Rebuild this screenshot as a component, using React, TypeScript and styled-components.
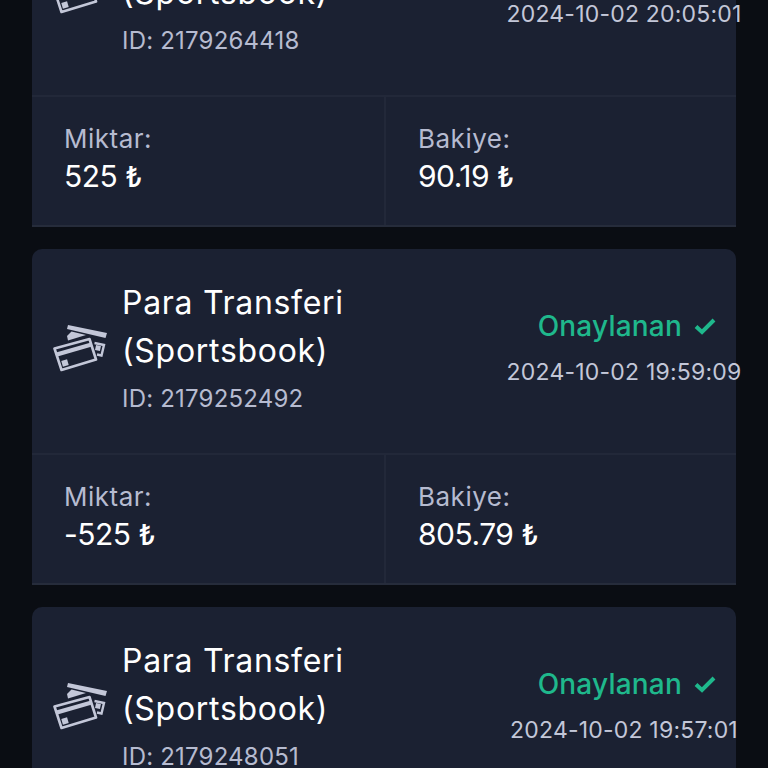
import { createGlobalStyle } from 'styled-components';
import styled from 'styled-components';

const GlobalStyle = createGlobalStyle`
  html, body {
    margin: 0;
    padding: 0;
    background: #0a0d13;
    overflow: hidden;
  }
`;

const Page = styled.div`
  width: 768px;
  height: 768px;
  overflow: hidden;
  font-family: Inter, 'Noto Sans', sans-serif;
`;

// list is scrolled, first card starts above the fold
const List = styled.ul`
  list-style: none;
  margin: -109px 0 0;
  padding: 0 32px;
  display: flex;
  flex-direction: column;
  gap: 22px;
`;

const Card = styled.li`
  background: #1b2132;
  border-radius: 10px 10px 0 0;
  border-bottom: 2px solid #262c3b;
`;

const Header = styled.div`
  height: 206px;
  box-sizing: border-box;
  display: flex;
  align-items: center;
  padding: 0 12px 4px 21px;
  border-bottom: 2px solid #222839;
`;

const IconBox = styled.div`
  width: 54px;
  height: 50px;
  flex: none;
  margin: 0 15px 4px 0;
`;

const Info = styled.div`
  flex: 1;
  min-width: 0;
`;

const Title = styled.div`
  color: #fff;
  font-size: 32px;
  line-height: 48px;
  letter-spacing: 0.7px;
`;

const Id = styled.div`
  color: #b6bbd0;
  font-size: 24px;
  line-height: 40px;
  letter-spacing: 0.2px;
  margin-top: 4px;
`;

const StatusCol = styled.div`
  width: 200px;
  flex: none;
  display: flex;
  flex-direction: column;
  align-items: center;
  white-space: nowrap;
`;

const Status = styled.div`
  align-self: flex-end;
  display: flex;
  align-items: center;
  gap: 12px;
  color: #1fb88c;
  font-size: 28px;
  font-weight: 500;
  line-height: 32px;
  letter-spacing: 0.2px;
  margin-right: 8px;
`;

const DateText = styled.div`
  color: #c3c7d8;
  font-size: 23px;
  line-height: 32px;
  letter-spacing: 0.2px;
  margin-top: 14px;
`;

const Cells = styled.div`
  display: grid;
  grid-template-columns: 1fr 1fr;
  height: 128px;
`;

const Cell = styled.div`
  box-sizing: border-box;
  padding: 25px 0 0 32px;
  & + & {
    border-left: 2px solid #222839;
  }
`;

const Label = styled.div`
  color: #b6bbd0;
  font-size: 26px;
  line-height: 34px;
  letter-spacing: 0.5px;
`;

const Value = styled.div`
  color: #fff;
  font-size: 30px;
  line-height: 40px;
  letter-spacing: -0.5px;
`;

const Lira = styled.span`
  font-size: 28px;
  font-weight: 500;
`;

function CardsIcon() {
  return (
    <svg width="54" height="50" viewBox="0 0 54 50" fill="none">
      <path d="M15 3 L54 11 L52.5 16 L14 7 Z" fill="#c3c7d8" />
      <path d="M14 14 L18.5 9.5 L33 13 L15 18.5 Z" fill="#c3c7d8" />
      <path d="M41.5 21 L51 23 L48.5 33.5 L44 32.5" stroke="#c3c7d8" strokeWidth="2.4" />
      <rect x="42.5" y="23.5" width="5" height="5" transform="rotate(12 45 26)" fill="#c3c7d8" />
      <path
        d="M1.5 26.5 L36.5 17 L43 37.5 L8.5 48 Z"
        fill="#1b2132"
        stroke="#c3c7d8"
        strokeWidth="2.6"
        strokeLinejoin="round"
      />
      <path d="M3 30.5 L38 20.5 L39 24.5 L4.5 34.5 Z" fill="#c3c7d8" />
      <rect x="9" y="38" width="6" height="6" transform="rotate(-16 12 41)" fill="#c3c7d8" />
    </svg>
  );
}

const rows = [
  { id: '2179264418', date: '2024-10-02 20:05:01', amount: '525', balance: '90.19' },
  { id: '2179252492', date: '2024-10-02 19:59:09', amount: '-525', balance: '805.79' },
  { id: '2179248051', date: '2024-10-02 19:57:01', amount: '-525', balance: '1330.79' },
];

export default function App() {
  return (
    <Page>
      <GlobalStyle />
      <List>
        {rows.map((row) => (
          <Card key={row.id}>
            <Header>
              <IconBox>
                <CardsIcon />
              </IconBox>
              <Info>
                <Title>
                  Para Transferi
                  <br />
                  (Sportsbook)
                </Title>
                <Id>ID: {row.id}</Id>
              </Info>
              <StatusCol>
                <Status>
                  Onaylanan
                  <svg width="22" height="18" viewBox="0 0 22 18" fill="none">
                    <path d="M2 9.5 L8 15 L20 3" stroke="#1fb88c" strokeWidth="4" />
                  </svg>
                </Status>
                <DateText>{row.date}</DateText>
              </StatusCol>
            </Header>
            <Cells>
              <Cell>
                <Label>Miktar:</Label>
                <Value>
                  {row.amount} <Lira>₺</Lira>
                </Value>
              </Cell>
              <Cell>
                <Label>Bakiye:</Label>
                <Value>
                  {row.balance} <Lira>₺</Lira>
                </Value>
              </Cell>
            </Cells>
          </Card>
        ))}
      </List>
    </Page>
  );
}
